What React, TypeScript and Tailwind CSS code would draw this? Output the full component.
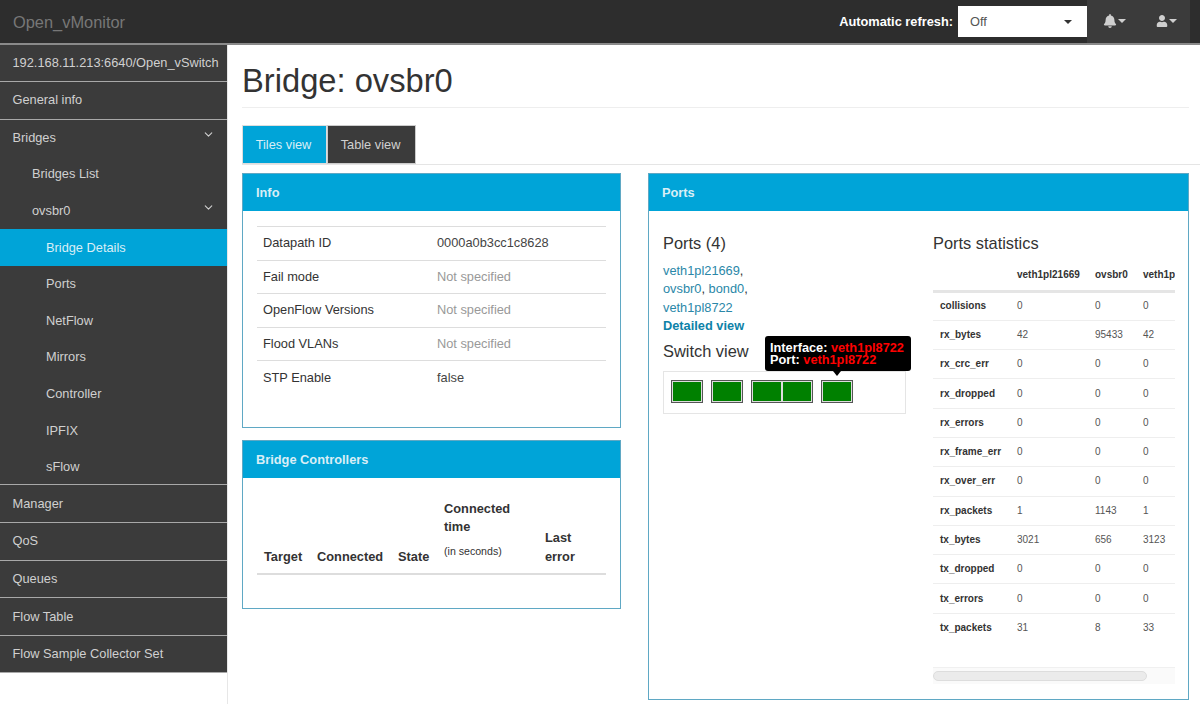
import { ChevronDown } from 'lucide-react';
import { FaBell, FaUser } from 'react-icons/fa';

const subItems = ['Ports', 'NetFlow', 'Mirrors', 'Controller', 'IPFIX', 'sFlow'];
const bottomItems = ['Manager', 'QoS', 'Queues', 'Flow Table', 'Flow Sample Collector Set'];

const info = [
    ['Datapath ID', '0000a0b3cc1c8628', false],
    ['Fail mode', 'Not specified', true],
    ['OpenFlow Versions', 'Not specified', true],
    ['Flood VLANs', 'Not specified', true],
    ['STP Enable', 'false', false],
] as const;

const stats = [
    ['collisions', '0', '0', '0'],
    ['rx_bytes', '42', '95433', '42'],
    ['rx_crc_err', '0', '0', '0'],
    ['rx_dropped', '0', '0', '0'],
    ['rx_errors', '0', '0', '0'],
    ['rx_frame_err', '0', '0', '0'],
    ['rx_over_err', '0', '0', '0'],
    ['rx_packets', '1', '1143', '1'],
    ['tx_bytes', '3021', '656', '3123'],
    ['tx_dropped', '0', '0', '0'],
    ['tx_errors', '0', '0', '0'],
    ['tx_packets', '31', '8', '33'],
];

function SwitchPort() {
    return <div className="w-[30px] h-[21px] bg-[#008000] border-[1.5px] border-[#dddddd]"></div>;
}

function PortGroup({ count }: { count: number }) {
    return (
        <div className="flex border border-[#555]">
            {Array.from({ length: count }).map((_, i) => <SwitchPort key={i} />)}
        </div>
    );
}

function Panel({ title, className, children }: { title: string; className: string; children: React.ReactNode }) {
    return (
        <div className={"border border-[#5fa8c4] " + className}>
            <div className="h-[37px] bg-[#00a4d8] px-[13px] flex items-center font-bold text-[#d9eef6]">{title}</div>
            {children}
        </div>
    );
}

export default function App() {
    return (
        <div className="h-[704px] overflow-hidden bg-white text-[12.8px] leading-[20px] text-[#333] font-['Liberation_Sans',Arial,sans-serif]">
            <div className="h-[45px] bg-[#2d2d2d] border-b-2 border-[#8a8a8a] flex items-center">
                <div className="pl-[13px] text-[16.4px] text-[#777]">Open_vMonitor</div>
                <div className="ml-auto font-bold text-white mr-[5px]">Automatic refresh:</div>
                <div className="w-[129px] h-[31px] bg-white text-[#555] flex items-center pl-[12px] pr-[15px] justify-between">
                    <span>Off</span>
                    <span className="border-x-[4px] border-x-transparent border-t-[4px] border-t-[#333]"></span>
                </div>
                <div className="h-[43px] pb-[2px] bg-[#3b3b3b] w-[103px] flex items-center text-[#cfcfcf] self-start">
                    <span className="flex items-center ml-[16px]">
                        <FaBell size={14} />
                        <span className="ml-[1px] border-x-[4px] border-x-transparent border-t-[4px] border-t-[#cfcfcf]"></span>
                    </span>
                    <span className="flex items-center ml-[30px]">
                        <FaUser size={12} />
                        <span className="ml-[1px] border-x-[4px] border-x-transparent border-t-[4px] border-t-[#cfcfcf]"></span>
                    </span>
                </div>
                <div className="w-[10px]"></div>
            </div>

            <div className="flex h-[659px]">
                <div className="w-[228px] shrink-0 border-r border-[#e7e7e7]">
                    <div className="bg-[#3b3b3b] text-[#d0d0d0]">
                        <div className="h-[37px] pl-[12.5px] flex items-center border-b border-[#a8a8a8]">192.168.11.213:6640/Open_vSwitch</div>
                        <div className="h-[37.5px] pl-[12.5px] flex items-center border-b border-[#a8a8a8]">General info</div>
                        <div className="h-[36.6px] pl-[12.5px] pr-[12px] flex items-center justify-between">Bridges <ChevronDown size={13} className="mt-[-6px]" /></div>
                        <div className="h-[36.6px] pl-[32px] flex items-center">Bridges List</div>
                        <div className="h-[36.6px] pl-[32px] pr-[12px] flex items-center justify-between">ovsbr0 <ChevronDown size={13} className="mt-[-6px]" /></div>
                        <div className="h-[36.6px] pl-[46px] flex items-center bg-[#00a4d8] text-[#d9eef6]">Bridge Details</div>
                        {subItems.map((item, i) => (
                            <div key={item} className={"h-[36.6px] pl-[46px] flex items-center " + (i === subItems.length - 1 ? 'border-b border-[#a8a8a8]' : '')}>{item}</div>
                        ))}
                        {bottomItems.map((item) => (
                            <div key={item} className="h-[37.6px] pl-[12.5px] flex items-center border-b border-[#a8a8a8]">{item}</div>
                        ))}
                    </div>
                </div>

                <div className="flex-1 min-w-0 pl-[14px] pr-[11px]">
                    <div className="h-[63px] pt-[9px] border-b border-[#eee] flex items-center">
                        <h1 className="text-[32.7px] leading-[36px] text-[#333]">Bridge: ovsbr0</h1>
                    </div>
                    <div className="flex mt-[17px] h-[40px] border-b border-[#e5e5e5] mr-[-11px]">
                        <div className="w-[85px] h-[39px] pr-[2px] bg-[#00a4d8] text-[#d9eef6] border border-[#ddd] flex items-center justify-center">Tiles view</div>
                        <div className="w-[89px] h-[39px] pr-[2px] bg-[#3b3b3b] text-[#d0d0d0] border border-[#ccc] flex items-center justify-center">Table view</div>
                    </div>

                    <div className="flex mt-[8px] gap-[27px]">
                        <div className="w-[379px] shrink-0 flex flex-col gap-[12px]">
                            <Panel title="Info" className="h-[255px]">
                                <div className="px-[14px] pt-[15px]">
                                    {info.map(([label, value, muted]) => (
                                        <div key={label} className="flex h-[33.6px] items-center pl-[6px] border-t border-[#ddd]">
                                            <div className="w-[174px]">{label}</div>
                                            <div className={muted ? 'text-[#999]' : 'text-[#444]'}>{value}</div>
                                        </div>
                                    ))}
                                </div>
                            </Panel>
                            <Panel title="Bridge Controllers" className="h-[169px]">
                                <div className="px-[14px]">
                                    <div className="h-[97px] flex items-end border-b-2 border-[#ddd] font-bold text-[#333] pb-[7px] leading-[19px]">
                                        <div className="pl-[7px] w-[60px]">Target</div>
                                        <div className="w-[81px]">Connected</div>
                                        <div className="w-[46px]">State</div>
                                        <div className="w-[101px] leading-[18px]">
                                            <div>Connected</div>
                                            <div>time</div>
                                            <div className="font-normal text-[10.6px] mt-[6px] mb-[6px]">(in seconds)</div>
                                        </div>
                                        <div className="w-[40px]">Last error</div>
                                    </div>
                                </div>
                            </Panel>
                        </div>

                        <Panel title="Ports" className="relative w-[541px] h-[527px] shrink-0">
                            <div className="flex pl-[14px]">
                                <div className="w-[243px] shrink-0">
                                    <div className="text-[16.4px] leading-[20px] mt-[22px]">Ports (4)</div>
                                    <div className="mt-[9px] leading-[18.3px] text-[#2a87a8]">
                                        <div>veth1pl21669<span className="text-[#333]">,</span></div>
                                        <div>ovsbr0<span className="text-[#333]">,</span> bond0<span className="text-[#333]">,</span></div>
                                        <div>veth1pl8722</div>
                                        <div className="font-bold text-[#0e82a8]">Detailed view</div>
                                    </div>
                                    <div className="text-[16.4px] leading-[20px] mt-[6px]">Switch view</div>
                                    <div className="mt-[10px] h-[43px] border border-[#e5e5e5] flex items-center pl-[7px] pb-[3px] gap-[8px]">
                                        <PortGroup count={1} />
                                        <PortGroup count={1} />
                                        <PortGroup count={2} />
                                        <PortGroup count={1} />
                                    </div>
                                </div>
                                <div className="ml-[27px] w-[242px] overflow-hidden">
                                    <div className="text-[16.4px] leading-[20px] mt-[22px]">Ports statistics</div>
                                    <table className="mt-[7px] text-[10px] w-[300px] table-fixed border-collapse">
                                        <thead>
                                            <tr className="h-[31px] border-b-[3px] border-[#e5e5e5] font-bold text-left">
                                                <th className="w-[84px]"></th>
                                                <th className="w-[78px]">veth1pl21669</th>
                                                <th className="w-[48px]">ovsbr0</th>
                                                <th className="whitespace-nowrap">veth1pl8722</th>
                                            </tr>
                                        </thead>
                                        <tbody>
                                            {stats.map(([name, a, b, c]) => (
                                                <tr key={name} className="h-[29.3px] border-t border-[#eee] text-[#555]">
                                                    <td className="pl-[7px] font-bold text-[#333]">{name}</td>
                                                    <td>{a}</td>
                                                    <td>{b}</td>
                                                    <td>{c}</td>
                                                </tr>
                                            ))}
                                        </tbody>
                                    </table>
                                    <div className="mt-[24px] h-[17px] bg-[#fafafa] border-t border-[#f0f0f0] flex items-center">
                                        <div className="w-[214px] h-[10px] rounded-full bg-[#ebebeb] border border-[#ddd]"></div>
                                    </div>
                                </div>
                            </div>
                            <div className="absolute left-[116px] top-[162px] w-[146px] h-[35px] bg-black rounded-[3px] text-white font-bold text-[12.75px] leading-[12px] pl-[5px] py-[6px] whitespace-nowrap">
                                <div>Interface: <span className="text-[#ff0000]">veth1pl8722</span></div>
                                <div>Port: <span className="text-[#ff0000]">veth1pl8722</span></div>
                                <div className="absolute left-[68px] top-[35px] border-x-[4px] border-x-transparent border-t-[5px] border-t-black"></div>
                            </div>
                        </Panel>
                    </div>
                </div>
            </div>
        </div>
    );
}
